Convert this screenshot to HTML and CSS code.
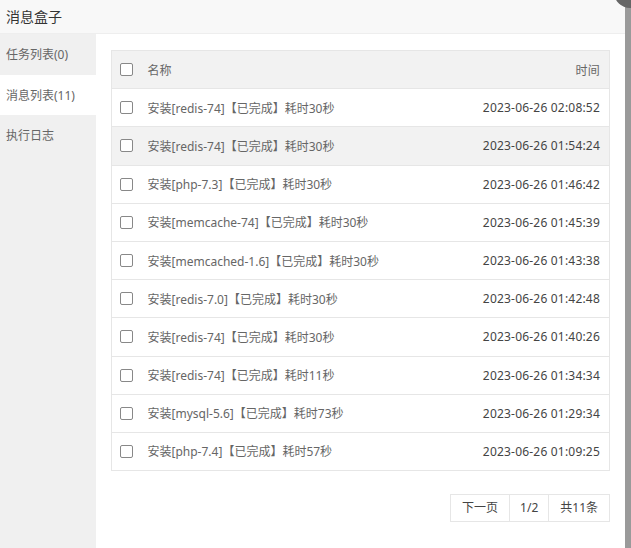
FILE: index.html
```html
<!DOCTYPE html>
<html lang="zh-CN">
<head>
    <meta charset="UTF-8">
    <title>消息盒子</title>
    <link rel="stylesheet" href="styles.css">
</head>
<body>
    <div class="msg-box">
        <div class="msg-title">消息盒子</div>
        <a class="msg-close" href="#"></a>
        <div class="msg-body">
            <ul class="msg-tabs">
                <li>任务列表(0)</li>
                <li class="active">消息列表(11)</li>
                <li>执行日志</li>
            </ul>
            <div class="msg-main">
                <table class="msg-table">
                    <thead>
                        <tr>
                            <th class="col-check"><span class="checkbox"></span></th>
                            <th>名称</th>
                            <th class="col-time">时间</th>
                        </tr>
                    </thead>
                    <tbody>
                        <tr>
                            <td class="col-check"><span class="checkbox"></span></td>
                            <td>安装[redis-74]【已完成】耗时30秒</td>
                            <td class="col-time">2023-06-26 02:08:52</td>
                        </tr>
                        <tr class="hover">
                            <td class="col-check"><span class="checkbox"></span></td>
                            <td>安装[redis-74]【已完成】耗时30秒</td>
                            <td class="col-time">2023-06-26 01:54:24</td>
                        </tr>
                        <tr>
                            <td class="col-check"><span class="checkbox"></span></td>
                            <td>安装[php-7.3]【已完成】耗时30秒</td>
                            <td class="col-time">2023-06-26 01:46:42</td>
                        </tr>
                        <tr>
                            <td class="col-check"><span class="checkbox"></span></td>
                            <td>安装[memcache-74]【已完成】耗时30秒</td>
                            <td class="col-time">2023-06-26 01:45:39</td>
                        </tr>
                        <tr>
                            <td class="col-check"><span class="checkbox"></span></td>
                            <td>安装[memcached-1.6]【已完成】耗时30秒</td>
                            <td class="col-time">2023-06-26 01:43:38</td>
                        </tr>
                        <tr>
                            <td class="col-check"><span class="checkbox"></span></td>
                            <td>安装[redis-7.0]【已完成】耗时30秒</td>
                            <td class="col-time">2023-06-26 01:42:48</td>
                        </tr>
                        <tr>
                            <td class="col-check"><span class="checkbox"></span></td>
                            <td>安装[redis-74]【已完成】耗时30秒</td>
                            <td class="col-time">2023-06-26 01:40:26</td>
                        </tr>
                        <tr>
                            <td class="col-check"><span class="checkbox"></span></td>
                            <td>安装[redis-74]【已完成】耗时11秒</td>
                            <td class="col-time">2023-06-26 01:34:34</td>
                        </tr>
                        <tr>
                            <td class="col-check"><span class="checkbox"></span></td>
                            <td>安装[mysql-5.6]【已完成】耗时73秒</td>
                            <td class="col-time">2023-06-26 01:29:34</td>
                        </tr>
                        <tr>
                            <td class="col-check"><span class="checkbox"></span></td>
                            <td>安装[php-7.4]【已完成】耗时57秒</td>
                            <td class="col-time">2023-06-26 01:09:25</td>
                        </tr>
                    </tbody>
                </table>
                <div class="pager">
                    <a href="#" class="next">下一页</a>
                    <span class="page">1/2</span>
                    <span class="total">共11条</span>
                </div>
            </div>
        </div>
    </div>
</body>
</html>
```

FILE: styles.css
```css
html, body {
    margin: 0;
    padding: 0;
    height: 100%;
}

body {
    background-color: #9a9a9a;
    font-family: "Noto Sans", "Noto Sans CJK SC", sans-serif;
    font-size: 12px;
    color: #555;
    overflow: hidden;
}

.msg-box {
    position: relative;
    width: 625px;
    height: 548px;
    background: white;
    display: flex;
    flex-direction: column;
}

.msg-title {
    height: 33px;
    line-height: 33px;
    padding-left: 6px;
    font-size: 14px;
    color: #333;
    background-color: #f8f8f8;
    border-bottom: 1px solid #eee;
}

.msg-close {
    position: absolute;
    top: -24px;
    right: -21px;
    width: 32px;
    height: 32px;
    border-radius: 50%;
    background-color: #666;
}

.msg-body {
    flex: 1;
    display: flex;
}

.msg-tabs {
    width: 96px;
    margin: 0;
    padding: 0;
    list-style: none;
    background-color: #f0f0f0;
}

.msg-tabs li {
    height: 40px;
    line-height: 42px;
    padding-left: 6px;
    color: #666;
}

.msg-tabs li:first-child {
    height: 41px;
}

.msg-tabs li.active {
    background-color: white;
}

.msg-main {
    flex: 1;
    padding: 16px 15px 0 15px;
}

.msg-table {
    width: 100%;
    border-collapse: collapse;
    border: 1px solid #e6e6e6;
}

.msg-table th,
.msg-table td {
    height: 37.2px;
    padding: 0;
    text-align: left;
    font-weight: normal;
    color: #666;
    border-bottom: 1px solid #e6e6e6;
}

.msg-table thead tr,
.msg-table tr.hover {
    background-color: #f2f2f2;
}

.msg-table .col-check {
    width: 36px;
    padding-left: 8px;
    box-sizing: border-box;
}

.msg-table .col-time {
    text-align: right;
    padding-right: 9px;
    color: #444;
    letter-spacing: 0.2px;
}

.msg-table thead .col-time {
    color: #666;
}

.checkbox {
    display: block;
    width: 11px;
    height: 11px;
    border: 1px solid #888;
    border-radius: 2px;
    background: white;
}

.pager {
    display: flex;
    justify-content: flex-end;
    margin-top: 23px;
}

.pager a,
.pager span {
    height: 26px;
    line-height: 26px;
    padding: 0 10px;
    border: 1px solid #e6e6e6;
    margin-left: -1px;
    color: #444;
    text-decoration: none;
    background: white;
}

.pager .next {
    padding: 0 11px;
}

.pager .total {
    padding: 0 11px;
}
```
